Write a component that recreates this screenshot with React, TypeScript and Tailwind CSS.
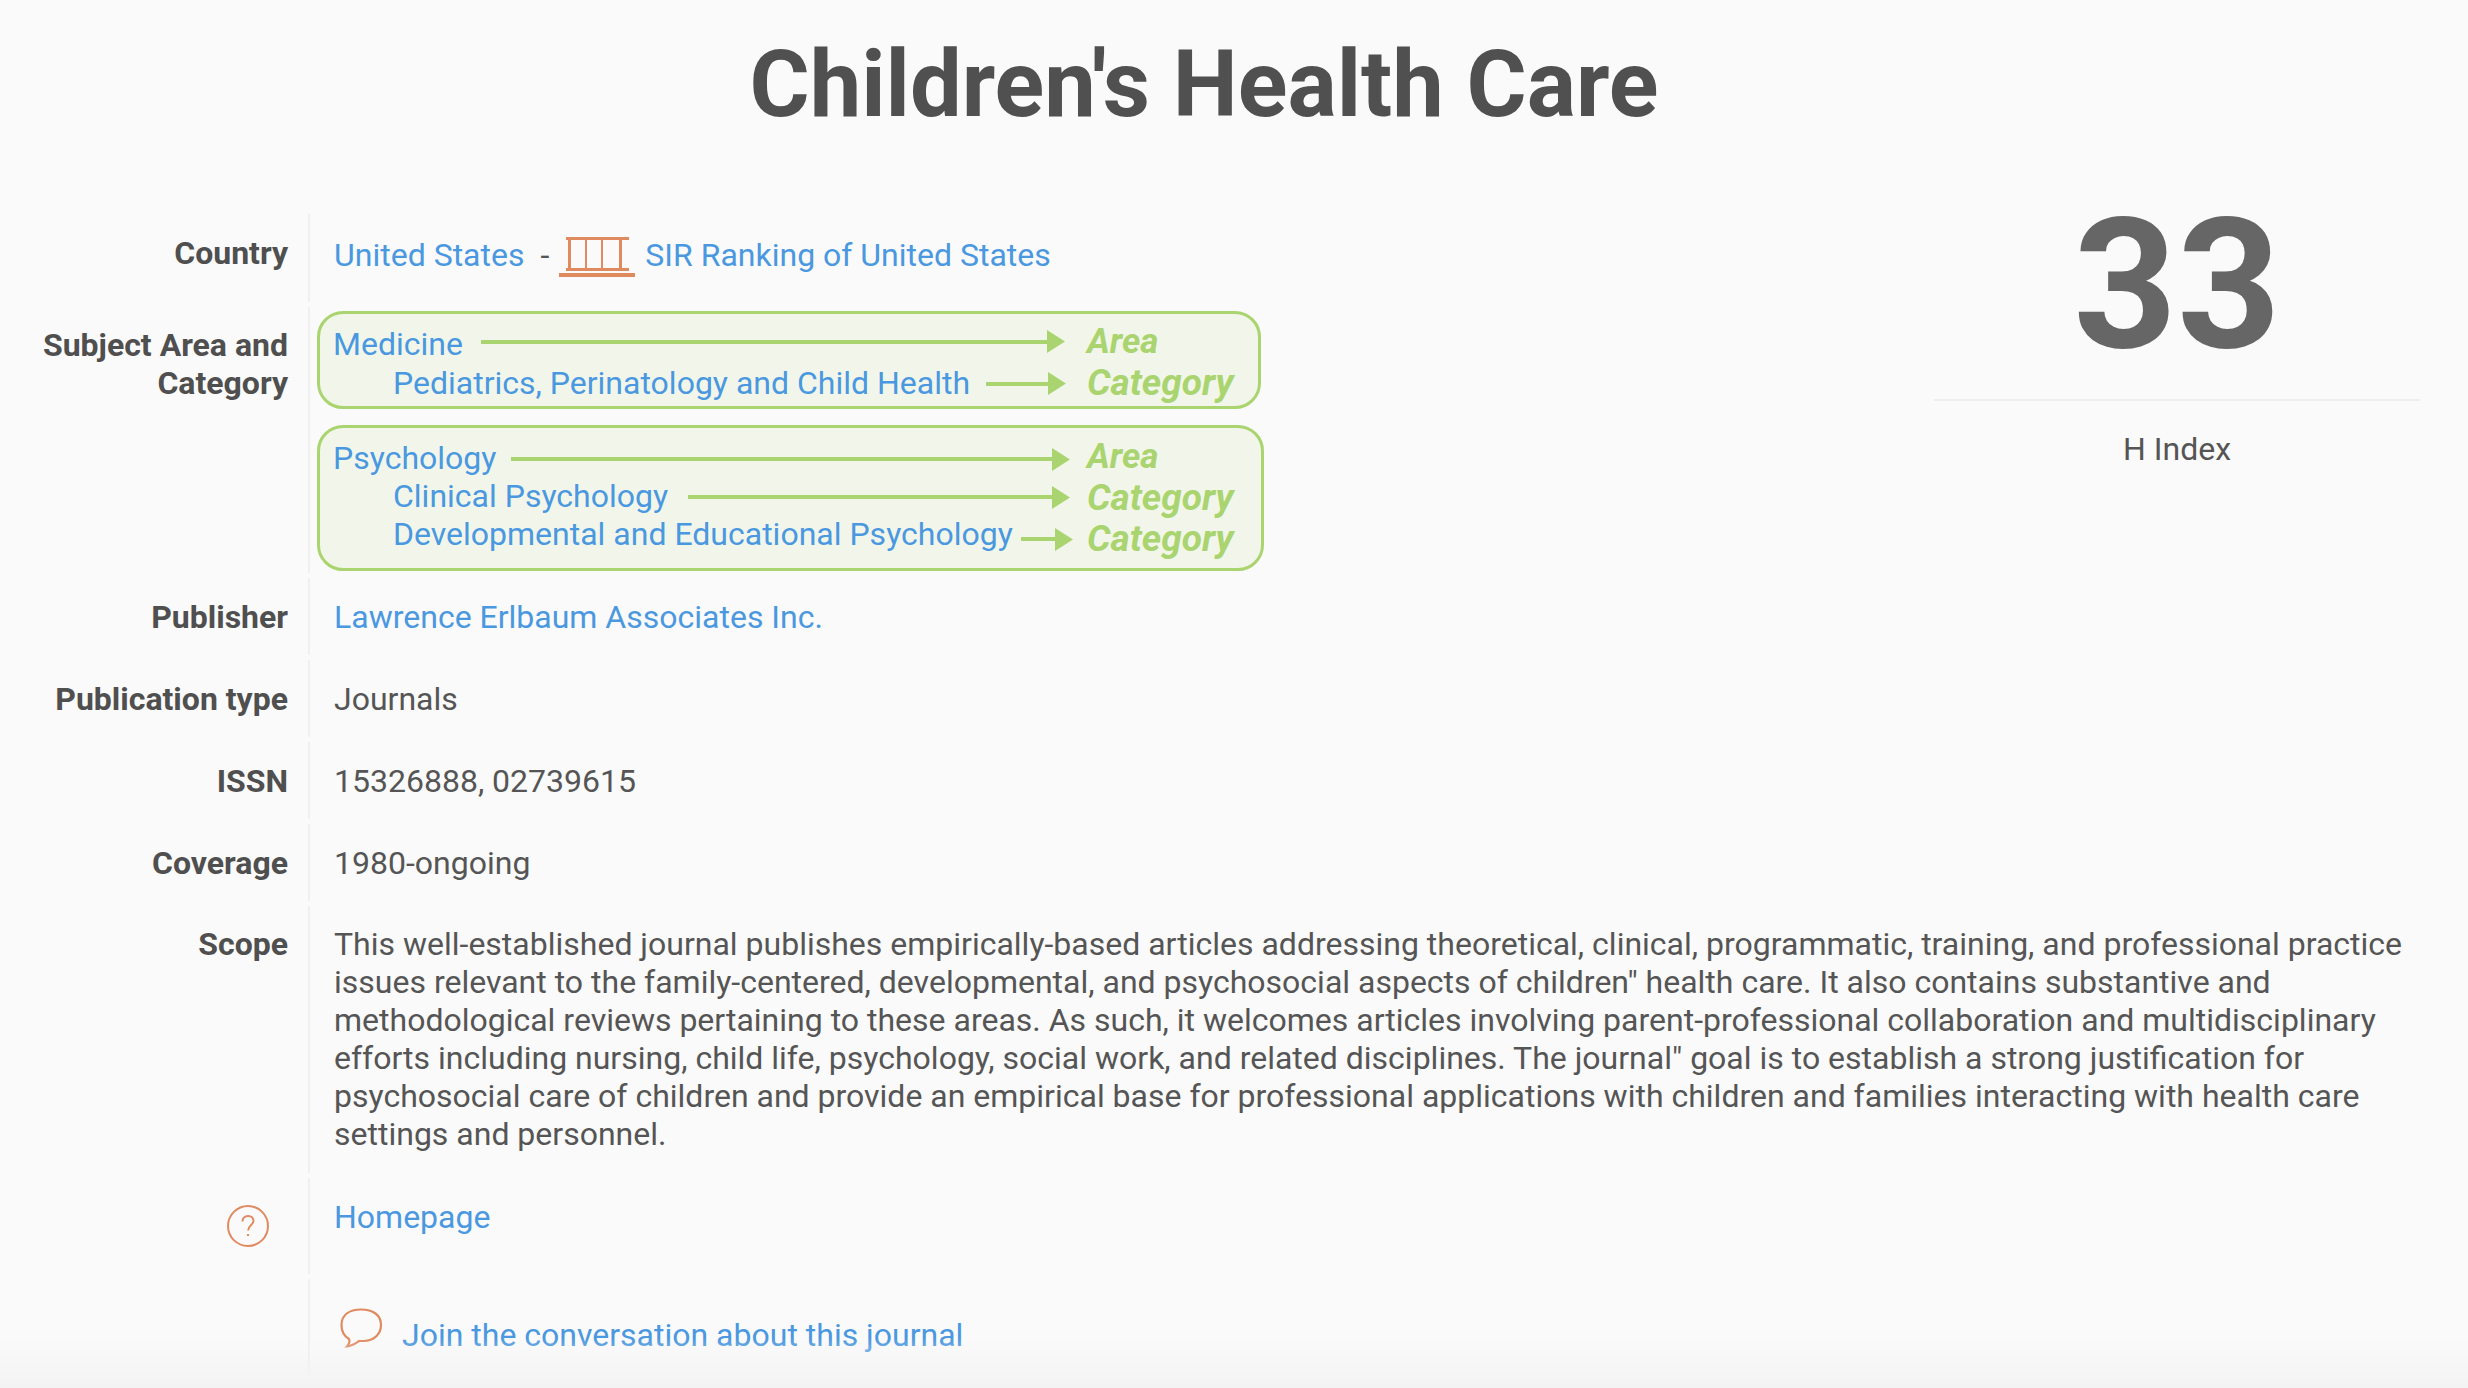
const link = "text-[#4a98e0]";

function Arrow({ ml, mr, shift }: { ml: string; mr: string; shift: string }) {
  return (
    <span className={`flex flex-1 items-center ${ml} ${mr} ${shift}`}>
      <span className="h-[4px] flex-1 bg-[#a9d46f]" />
      <svg width="18" height="23" viewBox="0 0 18 23" className="-ml-px shrink-0">
        <path d="M0 0 L18 11.5 L0 23 Z" fill="#a9d46f" />
      </svg>
    </span>
  );
}

function BoxRow({ text, sub, label, ml, mr, arrowShift, labelShift, h = "h-[38px]" }: { text: string; sub?: boolean; label: string; ml: string; mr: string; arrowShift: string; labelShift: string; h?: string }) {
  return (
    <div className={`flex ${h} items-center ${sub ? "pl-[60px]" : ""}`}>
      <a className={`${link} whitespace-nowrap`}>{text}</a>
      <Arrow ml={ml} mr={mr} shift={arrowShift} />
      <span className={`w-[156px] shrink-0 font-bold italic text-[#a9d46f] ${label === "Area" ? "text-[35px]" : "text-[37px]"} ${labelShift}`}>{label}</span>
    </div>
  );
}

function Row({ label, children, className = "" }: { label?: React.ReactNode; children: React.ReactNode; className?: string }) {
  return (
    <div className={`mb-[5px] flex ${className}`}>
      <div className="w-[288px] shrink-0 text-right font-bold text-[#4f4f4f]">{label}</div>
      <div className="ml-[20px] flex-1 border-l-2 border-[#f0f0f0] pl-[24px]">{children}</div>
    </div>
  );
}

export default function App() {
  return (
    <div className="relative h-[1388px] overflow-hidden bg-[#fafafa] font-['Roboto',sans-serif] text-[32px] leading-[38px] text-[#555555]">
      <h1 className="pt-[32px] pr-[60px] text-center text-[92px] leading-[106px] font-bold text-[#505050]">Children's Health Care</h1>
      <div className="mt-[76px] flex">
        <div className="flex-1">
          <Row label={<div className="pt-[20px]">Country</div>}>
            <div className="flex h-[88px] items-center pb-[6px]">
              <a className={link}>United States</a>
              <span className="ml-[16px]">-</span>
              <svg width="76" height="40" viewBox="0 0 76 40" className="mt-[4px] ml-[10px] shrink-0">
                <g fill="#e08a60">
                  <rect x="7" y="0" width="63" height="3" />
                  <rect x="7" y="31" width="63" height="3" />
                  <rect x="0" y="36" width="76" height="4" />
                  <rect x="9" y="2" width="3" height="30" />
                  <rect x="26" y="2" width="2" height="30" />
                  <rect x="42" y="2" width="2" height="30" />
                  <rect x="60" y="2" width="3" height="30" />
                </g>
              </svg>
              <a className={`${link} ml-[10px]`}>SIR Ranking of United States</a>
            </div>
          </Row>
          <Row label={<div className="pt-[19px] pl-[20px]">Subject Area and Category</div>} className="[&>div:last-child]:pl-0">
            <div className="ml-[7px] pt-[4px] pb-[2px]">
              <div className="mb-[16px] w-[944px] rounded-[26px] border-[3px] border-[#a9d46f] bg-[#f2f6ea] pt-[10px] pr-[15px] pb-[4px] pl-[13px]">
                <BoxRow h="h-[39px]" text="Medicine" label="Area" ml="ml-[18px]" mr="mr-[22px]" arrowShift="-translate-y-[2px]" labelShift="-translate-y-[2px]" />
                <BoxRow h="h-[39px]" text="Pediatrics, Perinatology and Child Health" sub label="Category" ml="ml-[16px]" mr="mr-[21px]" arrowShift="translate-y-[1px]" labelShift="translate-y-0" />
              </div>
              <div className="w-[947px] rounded-[26px] border-[3px] border-[#a9d46f] bg-[#f2f6ea] pt-[11px] pr-[18px] pb-[15px] pl-[13px]">
                <BoxRow text="Psychology" label="Area" ml="ml-[15px]" mr="mr-[17px]" arrowShift="translate-y-[1px]" labelShift="-translate-y-[1px]" />
                <BoxRow text="Clinical Psychology" sub label="Category" ml="ml-[20px]" mr="mr-[17px]" arrowShift="translate-y-[1px]" labelShift="translate-y-[2px]" />
                <BoxRow text="Developmental and Educational Psychology" sub label="Category" ml="ml-[8px]" mr="mr-[14px]" arrowShift="translate-y-[5px]" labelShift="translate-y-[5px]" />
              </div>
            </div>
          </Row>
          <Row label={<div className="pt-[20px]">Publisher</div>}><div className="pt-[20px] pb-[19px]"><a className={link}>Lawrence Erlbaum Associates Inc.</a></div></Row>
          <Row label={<div className="pt-[20px]">Publication type</div>}><div className="pt-[20px] pb-[19px]">Journals</div></Row>
          <Row label={<div className="pt-[20px]">ISSN</div>}><div className="pt-[20px] pb-[19px]">15326888, 02739615</div></Row>
          <Row label={<div className="pt-[20px]">Coverage</div>}><div className="pt-[20px] pb-[19px]">1980-ongoing</div></Row>
        </div>
        <div className="mr-[48px] w-[486px] shrink-0 text-center">
          <div className="mt-[-17px] h-[202px] text-[181px] leading-[177px] font-bold text-[#666666]">33</div>
          <div className="border-t-2 border-[#eeeeee] pt-[29px]">H Index</div>
        </div>
      </div>
      <div className="mr-[48px]">
        <Row label={<div className="pt-[19px]">Scope</div>}>
          <div className="pt-[19px] pb-[20px]">
            This well-established journal publishes empirically-based articles addressing theoretical, clinical, programmatic, training, and professional practice issues relevant to the family-centered, developmental, and psychosocial aspects of children" health care. It also contains substantive and methodological reviews pertaining to these areas. As such, it welcomes articles involving parent-professional collaboration and multidisciplinary efforts including nursing, child life, psychology, social work, and related disciplines. The journal" goal is to establish a strong justification for psychosocial care of children and provide an empirical base for professional applications with children and families interacting with health care settings and personnel.
          </div>
        </Row>
        <Row
          className="mb-[4px]"
          label={
            <div className="flex justify-end pt-[27px] pr-[19px]">
              <svg width="42" height="42" viewBox="0 0 42 42" fill="none" stroke="#e08a60" strokeWidth="2">
                <circle cx="21" cy="21" r="20" />
                <path d="M15.5 16.5c0-3.4 2.4-5.5 5.6-5.5s5.4 2 5.4 4.9c0 4-5.2 4.4-5.4 9.6" />
                <path d="M21 29v2" />
              </svg>
            </div>
          }
        >
          <div className="h-[96px] pt-[20px]"><a className={link}>Homepage</a></div>
        </Row>
        <Row>
          <div className="flex h-[96px] items-start">
            <svg width="44" height="40" viewBox="0 0 44 40" fill="none" stroke="#e08a60" strokeWidth="2.2" className="mt-[29px] ml-[6px] shrink-0">
              <path d="M21 1.5C33 1.5 41 7 41 17C41 27 33 32.5 24 33L19 33C16 35 12 38 7 38.5C9 36 10 33 9 31C4 28 1.5 23 1.5 17C1.5 7 9 1.5 21 1.5Z" />
            </svg>
            <a className={`${link} mt-[37px] ml-[18px]`}>Join the conversation about this journal</a>
          </div>
        </Row>
      </div>
      <div className="absolute inset-x-0 bottom-0 h-[50px] bg-gradient-to-b from-transparent to-[#f3f3f3]" />
    </div>
  );
}
